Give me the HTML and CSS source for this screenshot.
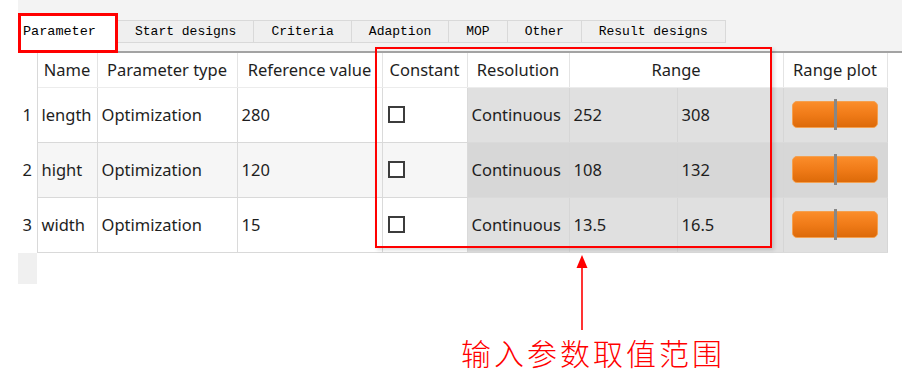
FILE: index.html
```html
<!DOCTYPE html>
<html lang="en">
<head>
    <meta charset="UTF-8">
    <title>Parameter</title>
    <link rel="stylesheet" href="styles.css">
</head>
<body>
    <div class="panel">
        <div class="tabbar">
            <div class="tab active">Parameter</div>
            <div class="tab">Start designs</div>
            <div class="tab">Criteria</div>
            <div class="tab">Adaption</div>
            <div class="tab">MOP</div>
            <div class="tab">Other</div>
            <div class="tab">Result designs</div>
        </div>

        <table class="grid">
            <colgroup>
                <col class="c-num">
                <col class="c-name">
                <col class="c-type">
                <col class="c-ref">
                <col class="c-const">
                <col class="c-res">
                <col class="c-min">
                <col class="c-max">
                <col class="c-plot">
            </colgroup>
            <thead>
                <tr>
                    <th class="num"></th>
                    <th>Name</th>
                    <th>Parameter type</th>
                    <th>Reference value</th>
                    <th>Constant</th>
                    <th>Resolution</th>
                    <th colspan="2">Range</th>
                    <th>Range plot</th>
                </tr>
            </thead>
            <tbody>
                <tr>
                    <td class="num">1</td>
                    <td>length</td>
                    <td>Optimization</td>
                    <td>280</td>
                    <td><span class="check"></span></td>
                    <td class="ro">Continuous</td>
                    <td class="ro">252</td>
                    <td class="ro">308</td>
                    <td class="ro"><div class="slider"><span class="handle"></span></div></td>
                </tr>
                <tr class="alt">
                    <td class="num">2</td>
                    <td>hight</td>
                    <td>Optimization</td>
                    <td>120</td>
                    <td><span class="check"></span></td>
                    <td class="ro">Continuous</td>
                    <td class="ro">108</td>
                    <td class="ro">132</td>
                    <td class="ro"><div class="slider"><span class="handle"></span></div></td>
                </tr>
                <tr>
                    <td class="num">3</td>
                    <td>width</td>
                    <td>Optimization</td>
                    <td>15</td>
                    <td><span class="check"></span></td>
                    <td class="ro">Continuous</td>
                    <td class="ro">13.5</td>
                    <td class="ro">16.5</td>
                    <td class="ro"><div class="slider"><span class="handle"></span></div></td>
                </tr>
            </tbody>
        </table>
        <div class="stub"></div>
    </div>

    <!-- annotations -->
    <div class="mark mark-tab"></div>
    <div class="mark mark-range"></div>
    <svg class="arrow" width="20" height="80" viewBox="0 0 20 80">
        <line x1="10" y1="12" x2="10" y2="75" stroke="#ff0000" stroke-width="1.6"/>
        <polygon points="10,0 4.5,13 15.5,13" fill="#ff0000"/>
    </svg>
    <p class="note">输入参数取值范围</p>
</body>
</html>
```

FILE: styles.css
```css
* {
    margin: 0;
    padding: 0;
    box-sizing: border-box;
}

body {
    width: 902px;
    height: 383px;
    background: #ffffff;
    position: relative;
    overflow: hidden;
    font-family: "Noto Sans", "Open Sans", sans-serif;
    color: #1e1e1e;
}

.panel {
    margin-left: 18px;
}

.tabbar {
    height: 53px;
    padding-top: 4px;
    background: #f3f3f3;
    border-bottom: 2px solid #a3a3a3;
    display: flex;
    align-items: flex-end;
    padding-bottom: 8px;
}

.tab {
    height: 23px;
    line-height: 22px;
    padding: 0 17px;
    background: #efefef;
    border: 1px solid #d9d9d9;
    border-left: none;
    font-family: "Liberation Mono", "DejaVu Sans Mono", monospace;
    font-size: 13px;
    color: #000;
}

.tab.active {
    height: 36px;
    margin-bottom: -8px;
    padding: 7px 0 0 5px;
    line-height: 20px;
    align-self: flex-end;
    background: #ffffff;
    border: none;
    width: 100px;
    font-size: 13.5px;
}

.grid {
    border-collapse: collapse;
    table-layout: fixed;
    width: 869px;
    font-size: 16.5px;
}

.c-num { width: 19px; }
.c-name { width: 60px; }
.c-type { width: 140px; }
.c-ref { width: 145px; }
.c-const { width: 85px; }
.c-res { width: 102px; }
.c-min { width: 108px; }
.c-max { width: 106px; }
.c-plot { width: 104px; }

.grid th {
    height: 34px;
    font-weight: normal;
    text-align: center;
    white-space: nowrap;
    background: #ffffff;
    border-right: 1px solid #e4e4e4;
    border-bottom: 1px solid #ececec;
}

.grid td {
    height: 55px;
    padding: 0 4px;
    white-space: nowrap;
    border-right: 1px solid #dadada;
    border-bottom: 1px solid #d9d9d9;
    background: #ffffff;
}

.grid tr.alt td {
    background: #f6f6f6;
}

.grid .num {
    text-align: center;
    padding: 0;
    background: #ffffff;
    border-right: 1px solid #d9d9d9;
    border-bottom: none;
}

.grid tr.alt td.num {
    background: #ffffff;
}

.grid td.ro {
    background: #e0e0e0;
    border-right: 1px solid #d6d6d6;
    border-bottom: 1px solid #dadada;
}

.grid tr.alt td.ro {
    background: #d7d7d7;
}

.check {
    display: block;
    width: 17px;
    height: 17px;
    margin-left: 1px;
    border: 2px solid #3c3c3c;
    background: #fff;
}

.slider {
    position: relative;
    width: 86px;
    height: 27px;
    margin: 0 0 1px 4px;
    border-radius: 5px;
    border: 1px solid #f4a04f;
    background: linear-gradient(to bottom, #fb8d2a 0%, #f07b18 50%, #dd6a09 100%);
}

.handle {
    position: absolute;
    left: 41px;
    top: -3px;
    width: 3px;
    height: 31px;
    background: #878787;
}

.stub {
    width: 19px;
    height: 31px;
    background: #f0f0f0;
}

.mark {
    position: absolute;
    border: 2px solid #ff0000;
}

.mark-tab {
    left: 18px;
    top: 13px;
    width: 100px;
    height: 40px;
    border-width: 3px;
}

.mark-range {
    left: 375px;
    top: 47px;
    width: 397px;
    height: 201px;
    box-shadow: 2px 2px 4px rgba(0, 0, 0, 0.15);
}

.arrow {
    position: absolute;
    left: 572px;
    top: 255px;
}

.note {
    position: absolute;
    left: 461px;
    top: 332px;
    font-family: "Noto Sans CJK SC", sans-serif;
    font-weight: 300;
    font-size: 30px;
    letter-spacing: 3px;
    color: #ff0000;
    line-height: 40px;
}
```
